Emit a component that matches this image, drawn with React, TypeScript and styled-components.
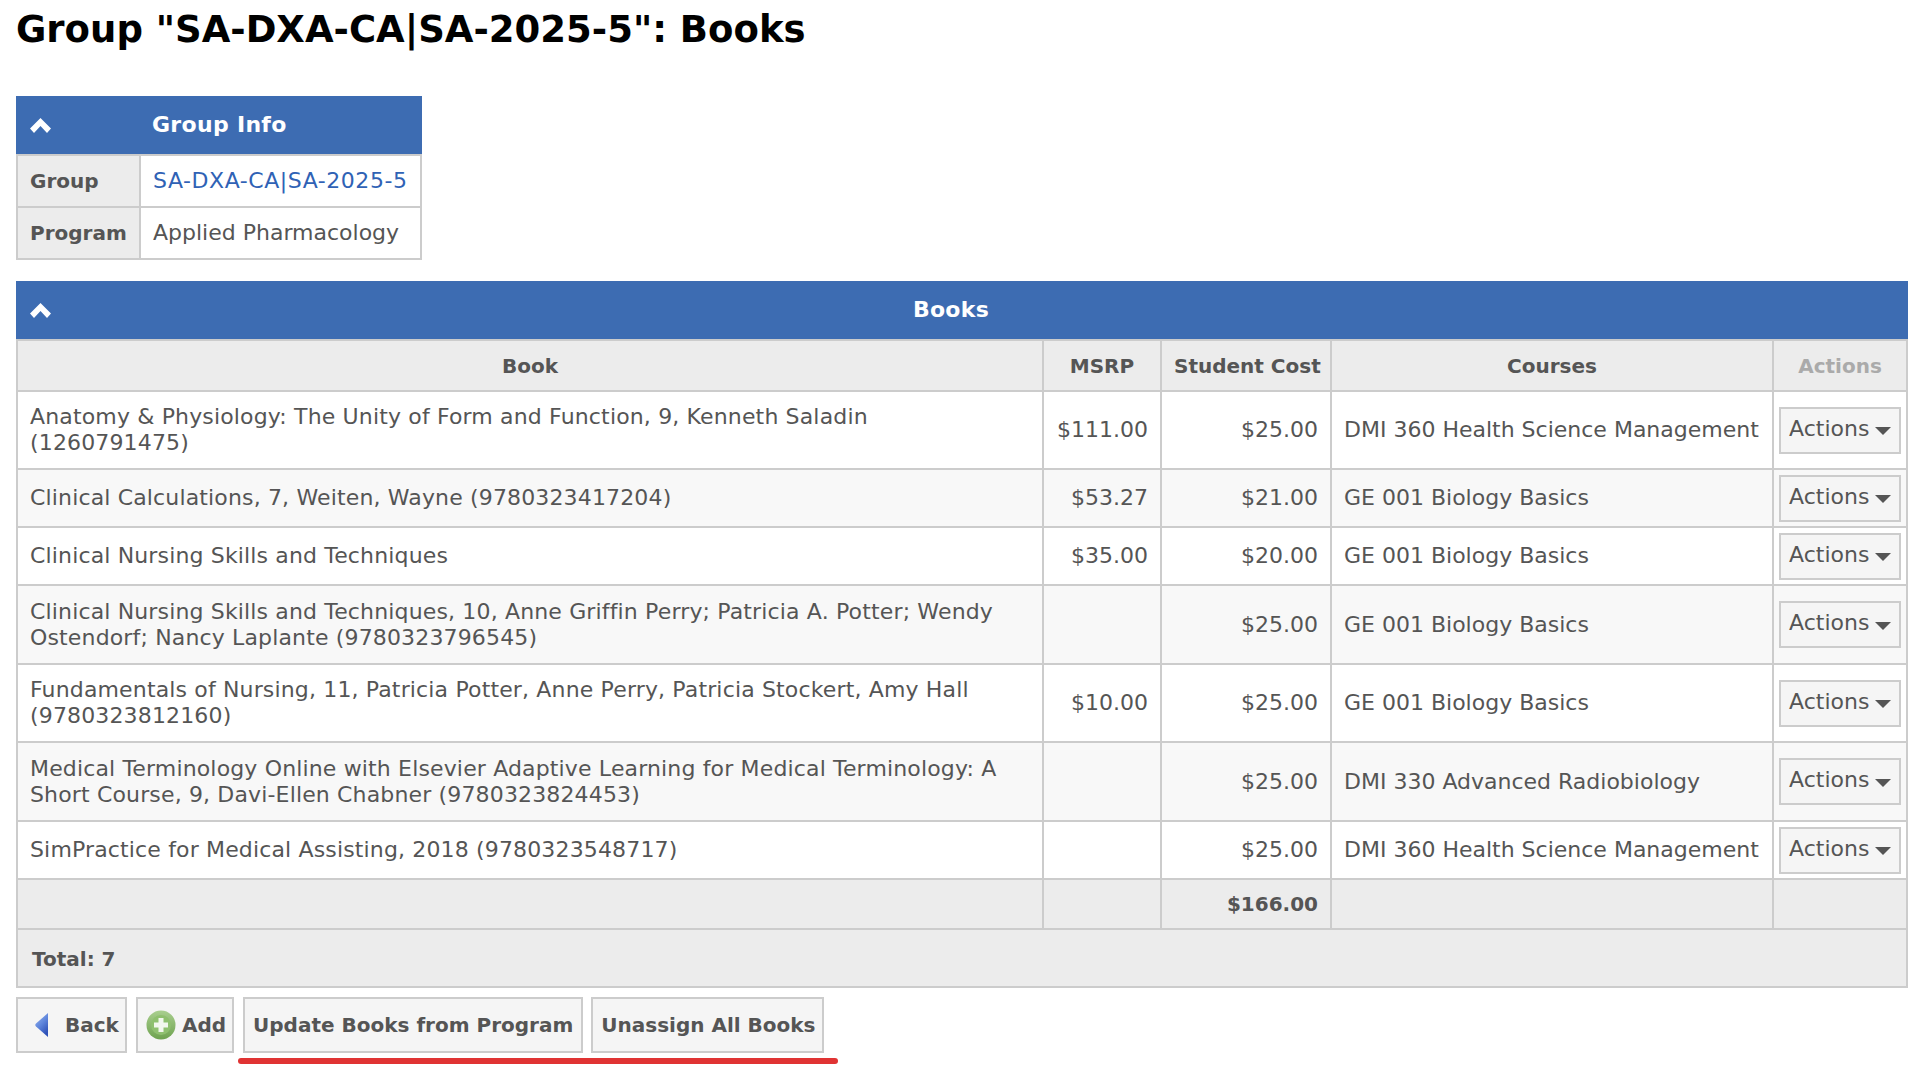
import styled, { createGlobalStyle } from 'styled-components'

const GlobalStyle = createGlobalStyle`
  html, body { margin: 0; padding: 0; background: #fff; }
  body { font-family: "DejaVu Sans", Verdana, sans-serif; font-size: 22px; line-height: 26px; color: #555; }
`

const books = [
  { title: 'Anatomy & Physiology: The Unity of Form and Function, 9, Kenneth Saladin (1260791475)', msrp: '$111.00', cost: '$25.00', course: 'DMI 360 Health Science Management', h: 78 },
  { title: 'Clinical Calculations, 7, Weiten, Wayne (9780323417204)', msrp: '$53.27', cost: '$21.00', course: 'GE 001 Biology Basics', h: 58 },
  { title: 'Clinical Nursing Skills and Techniques', msrp: '$35.00', cost: '$20.00', course: 'GE 001 Biology Basics', h: 58 },
  { title: 'Clinical Nursing Skills and Techniques, 10, Anne Griffin Perry; Patricia A. Potter; Wendy Ostendorf; Nancy Laplante (9780323796545)', msrp: '', cost: '$25.00', course: 'GE 001 Biology Basics', h: 79 },
  { title: 'Fundamentals of Nursing, 11, Patricia Potter, Anne Perry, Patricia Stockert, Amy Hall (9780323812160)', msrp: '$10.00', cost: '$25.00', course: 'GE 001 Biology Basics', h: 78 },
  { title: 'Medical Terminology Online with Elsevier Adaptive Learning for Medical Terminology: A Short Course, 9, Davi-Ellen Chabner (9780323824453)', msrp: '', cost: '$25.00', course: 'DMI 330 Advanced Radiobiology', h: 79 },
  { title: 'SimPractice for Medical Assisting, 2018 (9780323548717)', msrp: '', cost: '$25.00', course: 'DMI 360 Health Science Management', h: 58 },
]

const Page = styled.div`
  width: 1892px;
  min-height: 1086px;
  padding: 0 0 0 16px;
`

const Title = styled.h1`
  margin: 0;
  padding-top: 8px;
  height: 96px;
  box-sizing: border-box;
  font-size: 37px;
  line-height: 44px;
  font-weight: 700;
  color: #000;
`

const Panel = styled.div<{ $width: string; $gap: number }>`
  width: ${(p) => p.$width};
  margin-bottom: ${(p) => p.$gap}px;
`

const PanelHeader = styled.div<{ $center?: boolean }>`
  position: relative;
  height: 58px;
  background: #3d6cb2;
  color: #fff;
  font-weight: 700;
  letter-spacing: 0.3px;
  display: flex;
  align-items: center;
  justify-content: ${(p) => (p.$center ? 'center' : 'flex-start')};
  padding-left: ${(p) => (p.$center ? '0' : '136px')};
  padding-right: ${(p) => (p.$center ? '22px' : '0')};
`

const Chevron = styled.svg`
  position: absolute;
  left: 14px;
  top: 22px;
`

const Table = styled.table`
  width: 100%;
  border-collapse: collapse;
  table-layout: fixed;
  border: 2px solid #ccc;
  border-top: 0;

  th, td {
    border: 2px solid #ccc;
    padding: 0 12px;
  }
`

const InfoLabel = styled.th`
  width: 97px;
  height: 50px;
  background: #ececec;
  text-align: left;
  font-size: 20px;
  font-weight: 700;
`

const InfoValue = styled.td`
  background: #fff;
  white-space: nowrap;
`

const GroupLink = styled.a`
  color: #2f62b5;
  letter-spacing: 0.55px;
  text-decoration: none;
`

const HeadCell = styled.th<{ $muted?: boolean }>`
  height: 49px;
  background: #ececec;
  font-size: 20px;
  font-weight: 700;
  text-align: center;
  white-space: nowrap;
  color: ${(p) => (p.$muted ? '#aaa' : '#555')};
`

const BookRow = styled.tr<{ $odd: boolean }>`
  background: ${(p) => (p.$odd ? '#fff' : '#f8f8f8')};
`

const BookCell = styled.td`
  && { padding: 0 40px 0 12px; }
  letter-spacing: 0.15px;
`

const Money = styled.td`
  text-align: right;
  white-space: nowrap;
`

const NoWrapCell = styled.td`
  white-space: nowrap;
`

const ActionCell = styled.td`
  && { padding: 0 5px 0 5px; }
`

const ActionButton = styled.button`
  display: flex;
  align-items: center;
  gap: 6px;
  width: 100%;
  height: 47px;
  box-sizing: border-box;
  padding: 0 0 3px 8px;
  background: #f5f5f5;
  border: 2px solid #ccc;
  font: inherit;
  color: #555;
`

const Caret = styled.span`
  width: 0;
  height: 0;
  margin-top: 5px;
  border-left: 8px solid transparent;
  border-right: 8px solid transparent;
  border-top: 8px solid #555;
`

const SumCell = styled.td`
  height: 48px;
  background: #ececec;
  font-size: 20px;
  font-weight: 700;
  text-align: right;
`

const TotalBar = styled.div`
  height: 58px;
  box-sizing: border-box;
  display: flex;
  align-items: center;
  padding: 2px 0 0 14px;
  background: #ececec;
  border: 2px solid #ccc;
  border-top: 0;
  font-size: 20px;
  font-weight: 700;
`

const Toolbar = styled.div`
  display: flex;
  gap: 9px;
  margin-top: 9px;
`

const MarkedGroup = styled.div`
  position: relative;
  display: flex;
  gap: 8px;
`

const ToolButton = styled.button<{ $left: number; $right?: number; $gap?: number }>`
  display: flex;
  align-items: center;
  gap: ${(p) => p.$gap ?? 8}px;
  height: 56px;
  box-sizing: border-box;
  padding: 0 ${(p) => p.$right ?? 8}px 0 ${(p) => p.$left}px;
  background: #f5f5f5;
  border: 2px solid #ccc;
  font: inherit;
  font-size: 20px;
  font-weight: 700;
  color: #555;
  white-space: nowrap;
`

const RedMark = styled.div`
  position: absolute;
  left: -5px;
  right: -14px;
  bottom: -11px;
  height: 6px;
  border-radius: 3px;
  background: #e03333;
`

const ChevronUp = () => (
  <Chevron width="21" height="15" viewBox="0 0 21 15">
    <path d="M10.5 0 L21 10.5 L17 15 L10.5 8 L4 15 L0 10.5 Z" fill="#fff" />
  </Chevron>
)

const BackIcon = () => (
  <svg width="16" height="26" viewBox="0 0 16 26">
    <defs>
      <linearGradient id="backFill" x1="0" y1="0" x2="0.6" y2="1">
        <stop offset="0" stopColor="#9db8ee" />
        <stop offset="0.55" stopColor="#5f86dc" />
        <stop offset="1" stopColor="#2f52b8" />
      </linearGradient>
    </defs>
    <path d="M15 1 L15 25 L3 14.5 Q1.5 13 3 11.5 Z" fill="url(#backFill)" />
  </svg>
)

const AddIcon = () => (
  <svg width="30" height="30" viewBox="0 0 30 30">
    <defs>
      <linearGradient id="addRing" x1="0" y1="0" x2="0" y2="1">
        <stop offset="0" stopColor="#a9cf8f" />
        <stop offset="1" stopColor="#6ea24f" />
      </linearGradient>
    </defs>
    <circle cx="15" cy="15" r="14.5" fill="url(#addRing)" />
    <circle cx="15" cy="15" r="10" fill="#8fc06f" />
    <path d="M12.5 8 h5 v4.5 h4.5 v5 h-4.5 v4.5 h-5 v-4.5 h-4.5 v-5 h4.5 z" fill="#f2f7ee" />
  </svg>
)

const App = () => {
  return (
    <Page>
      <GlobalStyle />
      <Title>Group "SA-DXA-CA|SA-2025-5": Books</Title>

      <Panel $width="406px" $gap={21}>
        <PanelHeader>
          <ChevronUp />
          Group Info
        </PanelHeader>
        <Table>
          <tbody>
            <tr>
              <InfoLabel>Group</InfoLabel>
              <InfoValue><GroupLink href="#">SA-DXA-CA|SA-2025-5</GroupLink></InfoValue>
            </tr>
            <tr>
              <InfoLabel>Program</InfoLabel>
              <InfoValue>Applied Pharmacology</InfoValue>
            </tr>
          </tbody>
        </Table>
      </Panel>

      <Panel $width="1892px" $gap={0}>
        <PanelHeader $center>
          <ChevronUp />
          Books
        </PanelHeader>
        <Table>
          <colgroup>
            <col />
            <col style={{ width: 118 }} />
            <col style={{ width: 170 }} />
            <col style={{ width: 442 }} />
            <col style={{ width: 134 }} />
          </colgroup>
          <thead>
            <tr>
              <HeadCell>Book</HeadCell>
              <HeadCell>MSRP</HeadCell>
              <HeadCell>Student Cost</HeadCell>
              <HeadCell>Courses</HeadCell>
              <HeadCell $muted>Actions</HeadCell>
            </tr>
          </thead>
          <tbody>
            {books.map((book, i) => (
              <BookRow key={book.title} $odd={i % 2 === 0} style={{ height: book.h }}>
                <BookCell>{book.title}</BookCell>
                <Money>{book.msrp}</Money>
                <Money>{book.cost}</Money>
                <NoWrapCell>{book.course}</NoWrapCell>
                <ActionCell>
                  <ActionButton>Actions<Caret /></ActionButton>
                </ActionCell>
              </BookRow>
            ))}
            <tr>
              <SumCell />
              <SumCell />
              <SumCell>$166.00</SumCell>
              <SumCell />
              <SumCell />
            </tr>
          </tbody>
        </Table>
        <TotalBar>Total: 7</TotalBar>
      </Panel>

      <Toolbar>
        <ToolButton $left={15} $right={6} $gap={16}><BackIcon /> Back</ToolButton>
        <ToolButton $left={8} $right={6} $gap={6}><AddIcon /> Add</ToolButton>
        <MarkedGroup>
          <ToolButton $left={8}>Update Books from Program</ToolButton>
          <ToolButton $left={8} $right={6}>Unassign All Books</ToolButton>
          <RedMark />
        </MarkedGroup>
      </Toolbar>
    </Page>
  )
}

export default App
